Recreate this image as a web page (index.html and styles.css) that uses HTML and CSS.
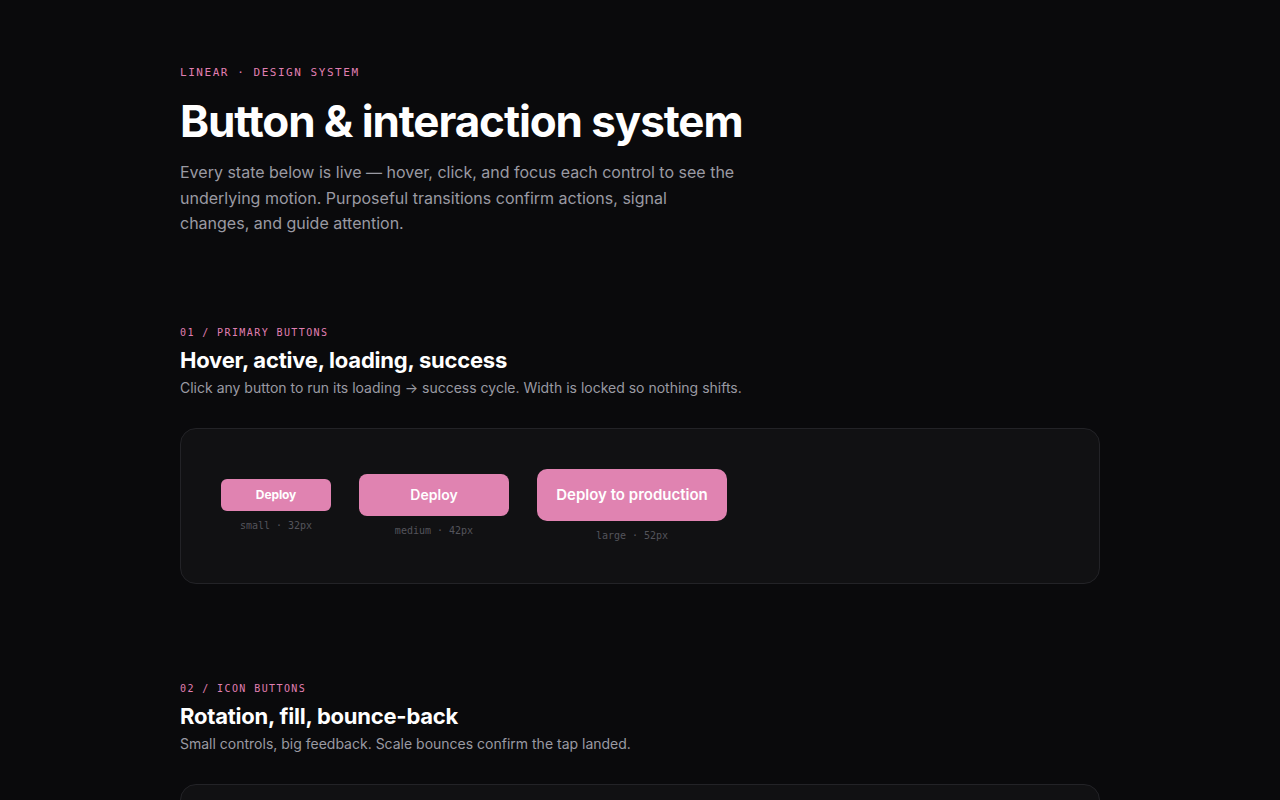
FILE: index.html
```html
<!DOCTYPE html>
<html lang="en">
<head>
<meta charset="utf-8">
<title>Button & interaction system</title>
<link rel="stylesheet" href="styles.css">
</head>
<body>
<main class="page">
  <header class="hero">
    <div class="eyebrow">LINEAR · DESIGN SYSTEM</div>
    <h1 class="title">Button &amp; interaction system</h1>
    <p class="lead">Every state below is live — hover, click, and focus each control to see the underlying motion. Purposeful transitions confirm actions, signal changes, and guide attention.</p>
  </header>

  <section class="section">
    <div class="section-label">01 / PRIMARY BUTTONS</div>
    <h2 class="section-title">Hover, active, loading, success</h2>
    <p class="section-desc">Click any button to run its loading → success cycle. Width is locked so nothing shifts.</p>
    <div class="card">
      <div class="btn-group">
        <button class="btn btn-sm">Deploy</button>
        <span class="btn-meta">small · 32px</span>
      </div>
      <div class="btn-group">
        <button class="btn btn-md">Deploy</button>
        <span class="btn-meta">medium · 42px</span>
      </div>
      <div class="btn-group">
        <button class="btn btn-lg">Deploy to production</button>
        <span class="btn-meta">large · 52px</span>
      </div>
    </div>
  </section>

  <section class="section">
    <div class="section-label">02 / ICON BUTTONS</div>
    <h2 class="section-title">Rotation, fill, bounce-back</h2>
    <p class="section-desc">Small controls, big feedback. Scale bounces confirm the tap landed.</p>
    <div class="card card-tall"></div>
  </section>
</main>
</body>
</html>
```

FILE: styles.css
```css
* { box-sizing: border-box; }
html, body { margin: 0; padding: 0; }
body {
  background: #0a0a0c;
  color: #f5f5f7;
  font-family: Inter, "Noto Sans", sans-serif;
  -webkit-font-smoothing: antialiased;
}
.page {
  width: 920px;
  margin: 0 auto;
  padding: 65px 0 80px;
}
.eyebrow {
  font-family: "DejaVu Sans Mono", monospace;
  font-size: 11px;
  line-height: 16px;
  letter-spacing: 0.14em;
  color: #e07fb2;
}
.title {
  margin: 12px 0 0;
  font-size: 44px;
  line-height: 56px;
  font-weight: 700;
  letter-spacing: -0.025em;
  color: #ffffff;
}
.lead {
  margin: 11px 0 0;
  max-width: 560px;
  font-size: 16px;
  line-height: 25.5px;
  color: #9a9aa3;
}
.section { margin-top: 89px; }
.section + .section { margin-top: 98px; }
.section-label {
  font-family: "DejaVu Sans Mono", monospace;
  font-size: 10px;
  line-height: 14px;
  letter-spacing: 0.14em;
  color: #e07fb2;
}
.section-title {
  margin: 6px 0 0;
  font-size: 22px;
  line-height: 29px;
  font-weight: 700;
  letter-spacing: -0.01em;
  color: #ffffff;
}
.section-desc {
  margin: 3px 0 0;
  font-size: 14px;
  line-height: 20px;
  color: #9a9aa3;
}
.card {
  margin-top: 30px;
  display: flex;
  align-items: center;
  gap: 28px;
  padding: 40px;
  background: #111113;
  border: 1px solid #232327;
  border-radius: 16px;
}
.card-tall { min-height: 156px; }
.btn-group {
  display: flex;
  flex-direction: column;
  align-items: center;
  gap: 8px;
}
.btn {
  border: 0;
  background: #e083b1;
  color: #ffffff;
  font-family: Inter, "Noto Sans", sans-serif;
  font-weight: 600;
  cursor: pointer;
  display: flex;
  align-items: center;
  justify-content: center;
  padding: 0;
}
.btn-sm { width: 110px; height: 32px; border-radius: 6px; font-size: 12px; font-weight: 700; letter-spacing: -0.01em; }
.btn-md { width: 150px; height: 42px; border-radius: 8px; font-size: 14px; }
.btn-lg { width: 190px; height: 52px; border-radius: 10px; font-size: 15px; }
.btn-meta {
  font-family: "DejaVu Sans Mono", monospace;
  font-size: 10px;
  line-height: 14px;
  color: #54545b;
}
```
